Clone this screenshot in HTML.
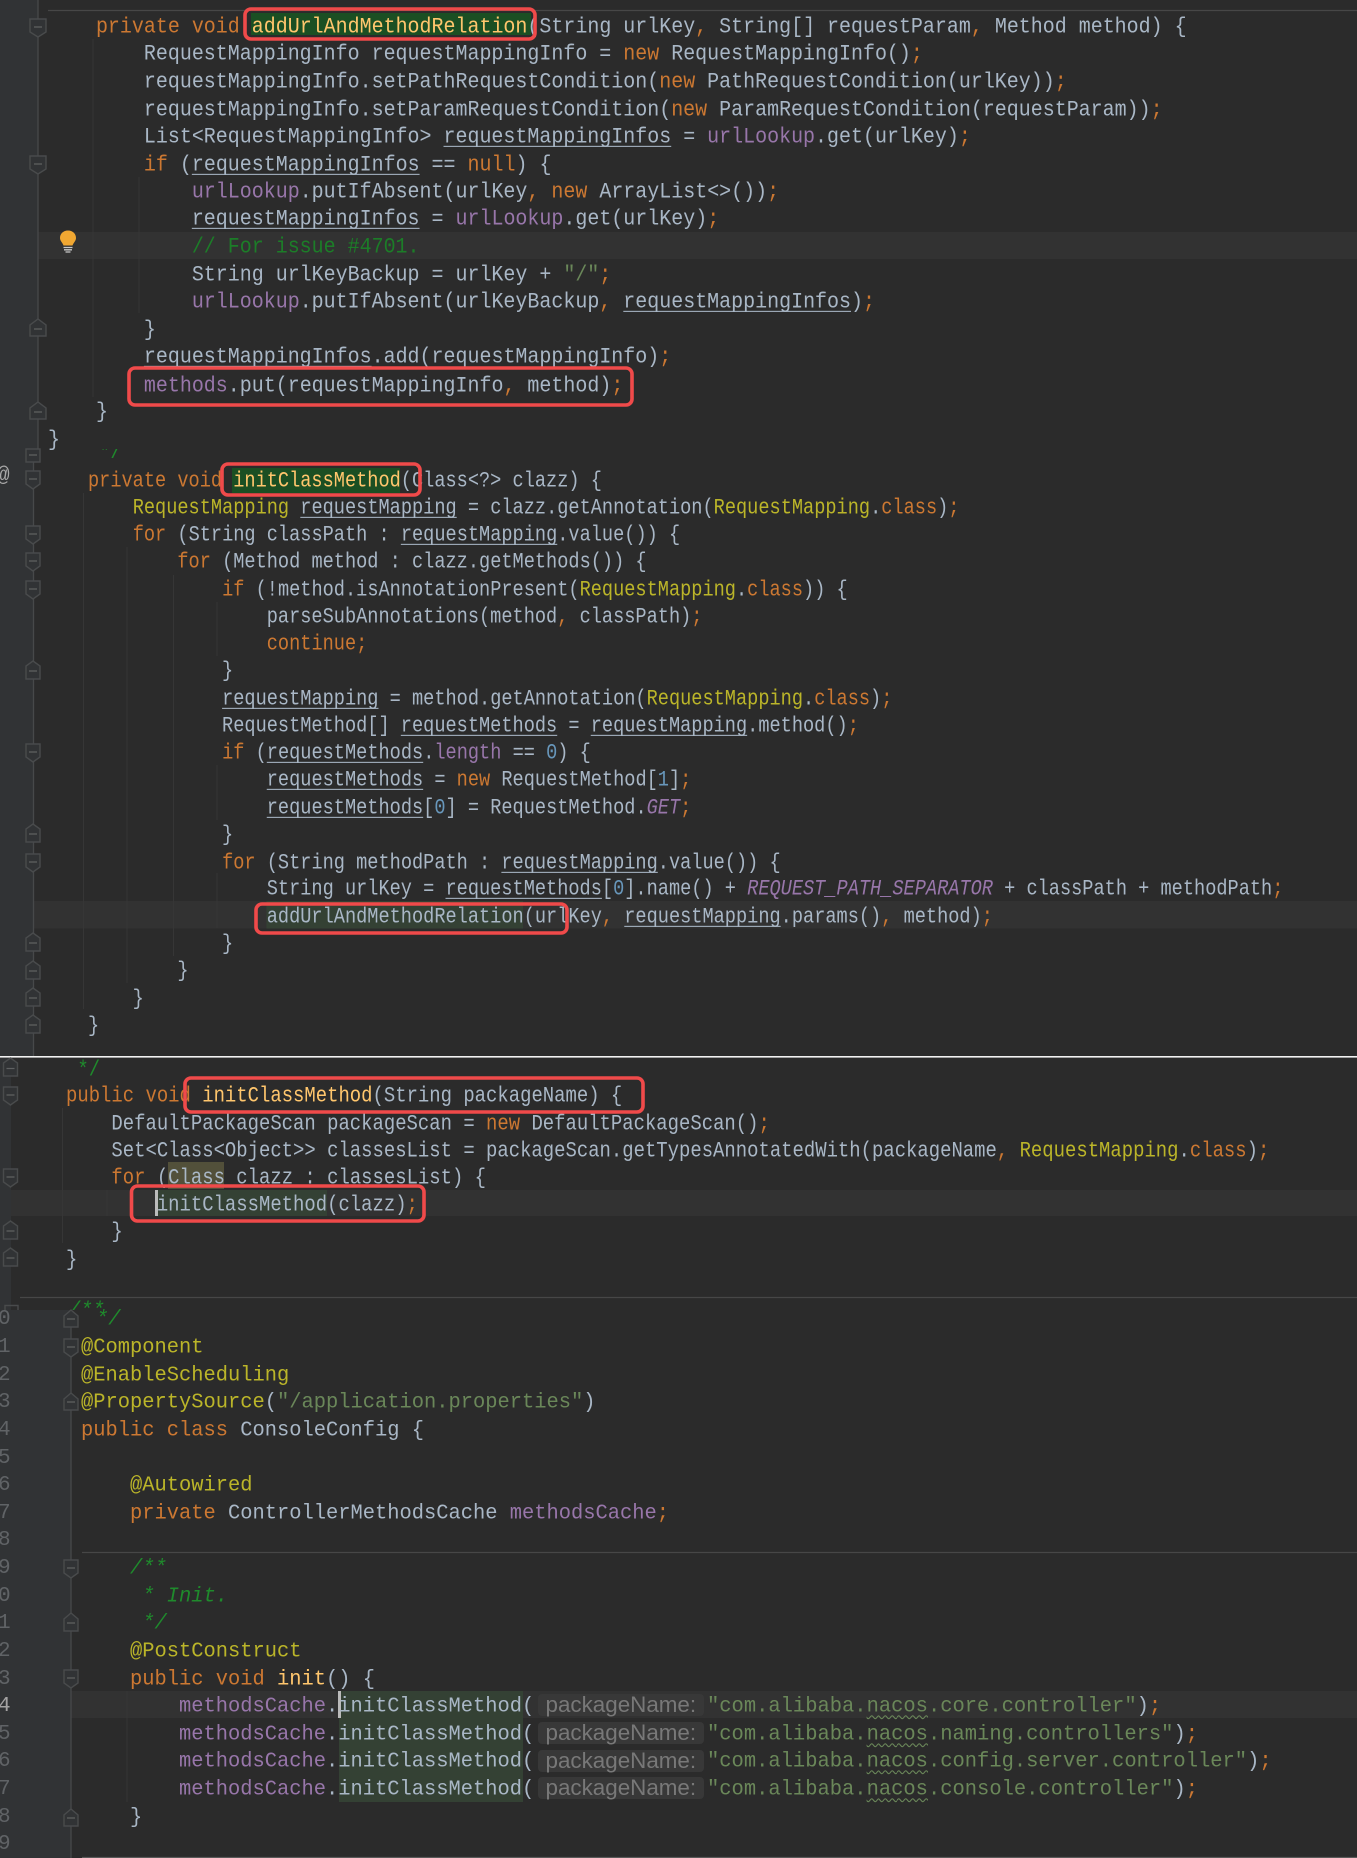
<!DOCTYPE html>
<html><head><meta charset="utf-8"><title>Code</title>
<style>
html,body{margin:0;padding:0;background:#2b2b2b}
#p{position:relative;width:1357px;height:1858px;overflow:hidden;background:#2b2b2b;font-family:"Liberation Mono",monospace;font-size:21px;line-height:28px;color:#a9b7c6}
svg.x{position:absolute;left:0;top:0}
.l{position:absolute;white-space:pre;transform-origin:0 0;height:28px}
.a .l{left:48.4px;transform:scale(.951,1.04)}
.b .l{left:88px;transform:scale(.8865,1.04)}
.c .l{left:66px;transform:scale(.9008,1.04)}
.d .l{left:81px;transform:scale(.972,1.03)}
.d .l.e{left:707.4px;transform:scale(.974,1.03)}
.k{color:#cc7832}.m{color:#ffc66d}.f{color:#9876aa}.t{color:#bbb529}.s{color:#6a8759}.g{color:#1f8a2c}.n{color:#6897bb}.i{font-style:italic}
.u{text-decoration:underline;text-decoration-thickness:1px;text-underline-offset:3px;text-decoration-skip-ink:none}
.w{text-decoration:underline wavy #6a8759 1px;text-underline-offset:3px;text-decoration-skip-ink:none}
.no{position:absolute;left:-2px;color:#606366;white-space:pre}
.h{position:absolute;left:538px;width:166px;height:22px;background:#383838;border-radius:4px;font:22.4px/21px "Liberation Sans",sans-serif;color:#787878;text-indent:7.5px;white-space:pre}
.clip{position:absolute;overflow:hidden}
</style></head><body><div id="p">
<svg class="x" width="1357" height="1858" xmlns="http://www.w3.org/2000/svg">
<rect x="0" y="0" width="38" height="449" fill="#313335"/>
<rect x="0" y="449" width="33.5" height="607" fill="#313335"/>
<rect x="0" y="1058" width="11" height="252" fill="#313335"/>
<rect x="0" y="1310" width="71" height="548" fill="#313335"/>
<rect x="38" y="232" width="1319" height="27" fill="#323232"/>
<rect x="33.5" y="901" width="1324" height="27.5" fill="#323232"/>
<rect x="11" y="1190" width="1346" height="26" fill="#323232"/>
<rect x="71" y="1691" width="1286" height="27" fill="#323232"/>
<rect x="251" y="13" width="280" height="22" fill="#1b4f23"/>
<rect x="232" y="468" width="168" height="25" fill="#1b4f23"/>
<rect x="266.5" y="901" width="256.5" height="27.5" fill="#344134"/>
<rect x="157" y="1190" width="170" height="26" fill="#344134"/>
<rect x="168" y="1162" width="56" height="27" fill="#52503a"/>
<rect x="339" y="1691" width="184" height="111" fill="#344134"/>
<g stroke="#363636" stroke-width="1" fill="none">
<path d="M93 39V397M139 177V313M83.5 493V1009M127 547V983M173.5 575V956M217 602V656M217 765V820M217 873V928M62.5 1108V1243M107 1190V1216M127 1691V1802"/>
</g>
<g stroke="#47494a" stroke-width="1.3" fill="none">
<path d="M38 0V449M33.5 449V1056M71 1310V1858"/>
<path d="M48 10.5H1357M20 1297.5H1357M82 1552.5H1357" stroke="#474747"/>
<path d="M82 1857.5H1357" stroke="#5a5a5a"/>
</g>
<rect x="0" y="1056" width="1357" height="1.6" fill="#f2f2f2"/>
<g fill="#313335" stroke="#494b4c" stroke-width="1.4">
<!-- down folds -->
<path d="M30 19H46V32L38 37L30 32Z"/><path d="M30 156H46V169L38 174L30 169Z"/>
<path d="M26 471H40V484L33 489L26 484Z"/><path d="M26 526H40V539L33 544L26 539Z"/><path d="M26 553H40V566L33 571L26 566Z"/><path d="M26 581H40V594L33 599L26 594Z"/><path d="M26 744H40V757L33 762L26 757Z"/><path d="M26 854H40V867L33 872L26 867Z"/>
<path d="M3.5 1087H17.5V1100L10.5 1105L3.5 1100Z"/><path d="M3.5 1169H17.5V1182L10.5 1187L3.5 1182Z"/>
<path d="M64 1339H78V1352L71 1357L64 1352Z"/><path d="M64 1560H78V1573L71 1578L64 1573Z"/><path d="M64 1670H78V1683L71 1688L64 1683Z"/>
<!-- up folds -->
<path d="M30 336H46V325L38 319L30 325Z"/><path d="M30 419H46V408L38 402L30 408Z"/>
<path d="M26 462H40V449H26Z"/><path d="M26 679H40V666L33 661L26 666Z"/><path d="M26 842H40V829L33 824L26 829Z"/><path d="M26 951H40V938L33 933L26 938Z"/><path d="M26 979H40V966L33 961L26 966Z"/><path d="M26 1006H40V993L33 988L26 993Z"/><path d="M26 1033H40V1020L33 1015L26 1020Z"/>
<path d="M3.5 1076H17.5V1063L10.5 1058L3.5 1063Z"/><path d="M3.5 1239H17.5V1226L10.5 1221L3.5 1226Z"/><path d="M3.5 1266H17.5V1253L10.5 1248L3.5 1253Z"/>
<path d="M5 1310V1305.5H18V1310" fill="none"/>
<path d="M64 1327H78V1316L71 1310L64 1316Z"/><path d="M64 1410H78V1399L71 1393L64 1399Z"/><path d="M64 1631H78V1619L71 1613L64 1619Z"/><path d="M64 1826H78V1815L71 1809L64 1815Z"/>
</g>
<path stroke="#5f6162" stroke-width="1.2" fill="none" d="M34 27H42M34 164H42M34 329H42M34 412H42M29 455H37M29 479H37M29 534H37M29 561H37M29 589H37M29 752H37M29 862H37M29 671H37M29 834H37M29 943H37M29 971H37M29 998H37M29 1025H37M6.5 1068.500H14.500M6.500 1095H14.500M6.500 1177H14.500M6.500 1231H14.500M6.500 1258H14.500M67 1319H75M67 1347H75M67 1402H75M67 1568H75M67 1623H75M67 1678H75M67 1818H75"/>
<!-- lamp -->
<path d="M68 230.500C63 230.500 60 234 60 238C60 241 62.500 242.500 63.500 245.500H72.500C73.500 242.500 76 241 76 238C76 234 73 230.500 68 230.500Z" fill="#f0a732"/>
<path d="M63.500 247.500H72.500M64 249.800H72M65.500 252H70.500" stroke="#c9c9c9" stroke-width="1.300"/>
<!-- carets -->
<rect x="155" y="1190" width="3" height="26" fill="#bbbbbb"/>
<rect x="338" y="1691" width="3" height="27" fill="#bbbbbb"/>
</svg>

<div class="a">
<div class="l" style="top:13.7px">    <span class="k">private void </span><span class="m">addUrlAndMethodRelation</span>(String urlKey<span class="k">,</span> String[] requestParam<span class="k">,</span> Method method) {</div>
<div class="l" style="top:41.2px">        RequestMappingInfo requestMappingInfo = <span class="k">new</span> RequestMappingInfo()<span class="k">;</span></div>
<div class="l" style="top:68.7px">        requestMappingInfo.setPathRequestCondition(<span class="k">new</span> PathRequestCondition(urlKey))<span class="k">;</span></div>
<div class="l" style="top:96.7px">        requestMappingInfo.setParamRequestCondition(<span class="k">new</span> ParamRequestCondition(requestParam))<span class="k">;</span></div>
<div class="l" style="top:123.7px">        List&lt;RequestMappingInfo&gt; <span class="u">requestMappingInfos</span> = <span class="f">urlLookup</span>.get(urlKey)<span class="k">;</span></div>
<div class="l" style="top:152.2px">        <span class="k">if</span> (<span class="u">requestMappingInfos</span> == <span class="k">null</span>) {</div>
<div class="l" style="top:178.7px">            <span class="f">urlLookup</span>.putIfAbsent(urlKey<span class="k">,</span> <span class="k">new</span> ArrayList&lt;&gt;())<span class="k">;</span></div>
<div class="l" style="top:206.2px">            <span class="u">requestMappingInfos</span> = <span class="f">urlLookup</span>.get(urlKey)<span class="k">;</span></div>
<div class="l" style="top:233.7px">            <span class="g" style="color:#1c7d28">// For issue #4701.</span></div>
<div class="l" style="top:262.2px">            String urlKeyBackup = urlKey + <span class="s">"/"</span><span class="k">;</span></div>
<div class="l" style="top:288.7px">            <span class="f">urlLookup</span>.putIfAbsent(urlKeyBackup<span class="k">,</span> <span class="u">requestMappingInfos</span>)<span class="k">;</span></div>
<div class="l" style="top:316.7px">        }</div>
<div class="l" style="top:343.7px">        <span class="u">requestMappingInfos</span>.add(requestMappingInfo)<span class="k">;</span></div>
<div class="l" style="top:372.9px">        <span class="f">methods</span>.put(requestMappingInfo<span class="k">,</span> method)<span class="k">;</span></div>
<div class="l" style="top:398.7px">    }</div>
<div class="l" style="top:426.7px">}</div>
</div>

<div class="clip" style="left:88px;top:449px;width:60px;height:16px"><div class="l g" style="left:0;top:-9.5px;transform:scaleX(.8865);transform-origin:0 0"> */</div></div>
<div class="clip" style="left:-3px;top:463px;width:14px;height:28px"><div class="l" style="left:0;top:0;color:#a8a8a8">@</div></div>

<div class="b">
<div class="l" style="top:468px"><span class="k">private void </span><span class="m">initClassMethod</span>(Class&lt;?&gt; clazz) {</div>
<div class="l" style="top:494.6px">    <span class="t">RequestMapping</span> <span class="u">requestMapping</span> = clazz.getAnnotation(<span class="t">RequestMapping</span>.<span class="k">class</span>)<span class="k">;</span></div>
<div class="l" style="top:521.6px">    <span class="k">for</span> (String classPath : <span class="u">requestMapping</span>.value()) {</div>
<div class="l" style="top:548.9px">        <span class="k">for</span> (Method method : clazz.getMethods()) {</div>
<div class="l" style="top:576.7px">            <span class="k">if</span> (!method.isAnnotationPresent(<span class="t">RequestMapping</span>.<span class="k">class</span>)) {</div>
<div class="l" style="top:603.5px">                parseSubAnnotations(method<span class="k">,</span> classPath)<span class="k">;</span></div>
<div class="l" style="top:630.7px">                <span class="k">continue;</span></div>
<div class="l" style="top:658px">            }</div>
<div class="l" style="top:685.8px">            <span class="u">requestMapping</span> = method.getAnnotation(<span class="t">RequestMapping</span>.<span class="k">class</span>)<span class="k">;</span></div>
<div class="l" style="top:712.6px">            RequestMethod[] <span class="u">requestMethods</span> = <span class="u">requestMapping</span>.method()<span class="k">;</span></div>
<div class="l" style="top:740.4px">            <span class="k">if</span> (<span class="u">requestMethods</span>.<span class="f">length</span> == <span class="n">0</span>) {</div>
<div class="l" style="top:767.2px">                <span class="u">requestMethods</span> = <span class="k">new</span> RequestMethod[<span class="n">1</span>]<span class="k">;</span></div>
<div class="l" style="top:794.5px">                <span class="u">requestMethods</span>[<span class="n">0</span>] = RequestMethod.<span class="f i">GET</span><span class="k">;</span></div>
<div class="l" style="top:821.8px">            }</div>
<div class="l" style="top:849.8px">            <span class="k">for</span> (String methodPath : <span class="u">requestMapping</span>.value()) {</div>
<div class="l" style="top:876.4px">                String urlKey = <span class="u">requestMethods</span>[<span class="n">0</span>].name() + <span class="f i">REQUEST_PATH_SEPARATOR</span> + classPath + methodPath<span class="k">;</span></div>
<div class="l" style="top:903.6px">                addUrlAndMethodRelation(urlKey<span class="k">,</span> <span class="u">requestMapping</span>.params()<span class="k">,</span> method)<span class="k">;</span></div>
<div class="l" style="top:930.9px">            }</div>
<div class="l" style="top:958.2px">        }</div>
<div class="l" style="top:985.5px">    }</div>
<div class="l" style="top:1012.8px">}</div>
</div>

<div class="c">
<div class="l g" style="top:1056.5px"> */</div>
<div class="l" style="top:1082.5px"><span class="k">public void </span><span class="m">initClassMethod</span>(String packageName) {</div>
<div class="l" style="top:1111px">    DefaultPackageScan packageScan = <span class="k">new</span> DefaultPackageScan()<span class="k">;</span></div>
<div class="l" style="top:1138px">    Set&lt;Class&lt;Object&gt;&gt; classesList = packageScan.getTypesAnnotatedWith(packageName<span class="k">,</span> <span class="t">RequestMapping</span>.<span class="k">class</span>)<span class="k">;</span></div>
<div class="l" style="top:1165px">    <span class="k">for</span> (Class clazz : classesList) {</div>
<div class="l" style="top:1192px">        initClassMethod(clazz)<span class="k">;</span></div>
<div class="l" style="top:1219px">    }</div>
<div class="l" style="top:1246.500px">}</div>
</div>

<div class="clip" style="left:68px;top:1298px;width:42px;height:12px"><div class="l g i" style="left:0;top:0;transform:scaleX(.968);transform-origin:0 0">/**</div></div>

<div class="no" style="top:1306.3px">0</div><div class="no" style="top:1333.9px">1</div><div class="no" style="top:1361.6px">2</div><div class="no" style="top:1389.2px">3</div><div class="no" style="top:1416.8px">4</div><div class="no" style="top:1444.5px">5</div><div class="no" style="top:1472.1px">6</div><div class="no" style="top:1499.7px">7</div><div class="no" style="top:1527.3px">8</div><div class="no" style="top:1555px">9</div><div class="no" style="top:1582.6px">0</div><div class="no" style="top:1610.2px">1</div><div class="no" style="top:1637.9px">2</div><div class="no" style="top:1665.5px">3</div><div class="no" style="top:1693.1px;color:#a4a3a3">4</div><div class="no" style="top:1720.8px">5</div><div class="no" style="top:1748.4px">6</div><div class="no" style="top:1776px">7</div><div class="no" style="top:1803.6px">8</div><div class="no" style="top:1831.3px">9</div>

<div class="h" style="top:1694px">packageName:</div>
<div class="h" style="top:1722px">packageName:</div>
<div class="h" style="top:1750px">packageName:</div>
<div class="h" style="top:1777px">packageName:</div>

<div class="d">
<div class="l g i" style="top:1306.3px;left:96px">*/</div>
<div class="l t" style="top:1333.9px">@Component</div>
<div class="l t" style="top:1361.6px">@EnableScheduling</div>
<div class="l" style="top:1389.2px"><span class="t">@PropertySource</span>(<span class="s">"/application.properties"</span>)</div>
<div class="l" style="top:1416.8px"><span class="k">public class</span> ConsoleConfig {</div>
<div class="l t" style="top:1472.1px">    @Autowired</div>
<div class="l" style="top:1499.7px">    <span class="k">private</span> ControllerMethodsCache <span class="f">methodsCache</span><span class="k">;</span></div>
<div class="l g i" style="top:1555px">    /**</div>
<div class="l g i" style="top:1582.6px">     * Init.</div>
<div class="l g i" style="top:1610.2px">     */</div>
<div class="l t" style="top:1637.9px">    @PostConstruct</div>
<div class="l" style="top:1665.5px">    <span class="k">public void </span><span class="m">init</span>() {</div>
<div class="l" style="top:1693.1px">        <span class="f">methodsCache</span>.initClassMethod(</div>
<div class="l" style="top:1720.8px">        <span class="f">methodsCache</span>.initClassMethod(</div>
<div class="l" style="top:1748.4px">        <span class="f">methodsCache</span>.initClassMethod(</div>
<div class="l" style="top:1776px">        <span class="f">methodsCache</span>.initClassMethod(</div>
<div class="l" style="top:1803.6px">    }</div>
<div class="l e" style="top:1693.1px"><span class="s">"com.alibaba.<span class="w">nacos</span>.core.controller"</span>)<span class="k">;</span></div>
<div class="l e" style="top:1720.8px"><span class="s">"com.alibaba.<span class="w">nacos</span>.naming.controllers"</span>)<span class="k">;</span></div>
<div class="l e" style="top:1748.4px"><span class="s">"com.alibaba.<span class="w">nacos</span>.config.server.controller"</span>)<span class="k">;</span></div>
<div class="l e" style="top:1776px"><span class="s">"com.alibaba.<span class="w">nacos</span>.console.controller"</span>)<span class="k">;</span></div>
</div>

<svg class="x" width="1357" height="1858" xmlns="http://www.w3.org/2000/svg">
<g fill="none" stroke="#f04a4a" stroke-width="3.6">
<rect x="245" y="9" width="290" height="30" rx="6"/>
<rect x="129" y="368" width="503" height="37" rx="6"/>
<rect x="222" y="464" width="198" height="31" rx="6"/>
<rect x="256" y="904" width="311" height="29" rx="6"/>
<rect x="185" y="1078" width="458" height="34" rx="6"/>
<rect x="131.500" y="1186" width="292.500" height="35" rx="6"/>
</g>
</svg>
</div></body></html>
